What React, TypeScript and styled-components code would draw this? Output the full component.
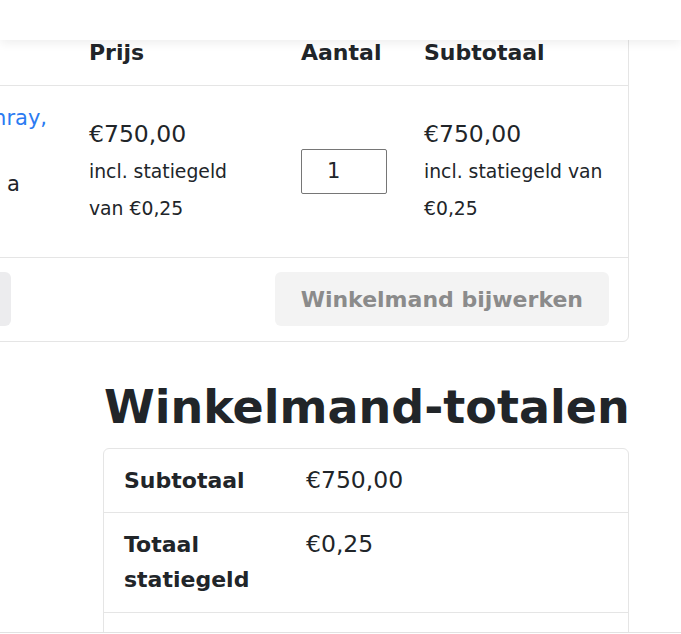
import { FC } from 'react';
import styled, { createGlobalStyle } from 'styled-components';

const GlobalStyle = createGlobalStyle`
  html, body {
    margin: 0;
    padding: 0;
    background: #ffffff;
    overflow: hidden;
  }
  body {
    font-family: "DejaVu Sans", Inter, sans-serif;
    color: #212529;
  }
`;

const TopBar = styled.header`
  position: fixed;
  top: 0;
  left: 0;
  right: 0;
  height: 40px;
  background: #ffffff;
  box-shadow: 0 3px 10px rgba(0, 0, 0, 0.07);
  z-index: 10;
`;

const BottomBar = styled.div`
  position: fixed;
  left: 0;
  right: 0;
  top: 632px;
  height: 10px;
  background: #ffffff;
  border-top: 1px solid #e2e2e2;
  z-index: 10;
`;

const Page = styled.main`
  display: flex;
  flex-direction: column;
  align-items: flex-end;
  padding: 20px 52px 0 0;
  height: 634px;
  box-sizing: border-box;
`;

const Card = styled.div<{ $width: number }>`
  width: ${({ $width }) => $width}px;
  flex-shrink: 0;
  border: 1px solid #e5e5e5;
  border-radius: 6px;
  box-sizing: border-box;
  background: #ffffff;
`;

const CartRow = styled.div<{ $divider?: boolean }>`
  display: grid;
  grid-template-columns: minmax(0, 1fr) 212px 123px 224px;
  align-items: center;
  border-bottom: ${({ $divider }) => ($divider ? '1px solid #e5e5e5' : 'none')};
`;

const HeadCell = styled.div`
  padding: 18px 20px;
  font-size: 22px;
  line-height: 28px;
  font-weight: 700;
  white-space: nowrap;
`;

const Cell = styled.div`
  padding: 29px 20px 30px;
`;

const ProductCell = styled.div`
  align-self: start;
  padding: 16px 20px;
  text-align: right;
  overflow: hidden;
`;

const ProductLine = styled.div<{ $inset: number; $link?: boolean }>`
  padding-right: ${({ $inset }) => $inset}px;
  white-space: nowrap;
  font-size: 21px;
  line-height: 33px;
  color: ${({ $link }) => ($link ? '#2b7bf2' : '#212529')};
`;

const Amount = styled.div`
  font-size: 23.5px;
  line-height: 38px;
  white-space: nowrap;
`;

const Note = styled.div`
  font-size: 18.8px;
  line-height: 37px;
  white-space: nowrap;
`;

const QtyInput = styled.input`
  display: block;
  width: 86px;
  height: 45px;
  box-sizing: border-box;
  border: 1px solid #767676;
  border-radius: 2px;
  font-family: inherit;
  font-size: 21px;
  color: #212529;
  padding: 0 0 0 25px;
  background: #ffffff;
`;

const ActionsRow = styled.div`
  display: flex;
  justify-content: space-between;
  align-items: center;
  padding: 14px 19px 15px 20px;
`;

const CouponGroup = styled.div`
  display: flex;
  gap: 12px;
  width: 261px;
  justify-content: flex-end;
`;

const Button = styled.button<{ $tone: 'muted' | 'soft' }>`
  height: 54px;
  border: none;
  border-radius: 6px;
  padding: 0 26px;
  font-family: inherit;
  font-size: 22px;
  font-weight: 700;
  white-space: nowrap;
  background: ${({ $tone }) => ($tone === 'muted' ? '#f3f3f3' : '#ececee')};
  color: #8b8b8b;
`;

const TotalsHeading = styled.h2`
  width: 525px;
  margin: 37px 0 13px;
  box-sizing: border-box;
  font-size: 46px;
  line-height: 56px;
  font-weight: 700;
  white-space: nowrap;
`;

const TotalsRow = styled.div<{ $height: number }>`
  display: grid;
  grid-template-columns: 182px 1fr;
  min-height: ${({ $height }) => $height}px;
  border-bottom: 1px solid #e5e5e5;
  box-sizing: border-box;
`;

const TotalsLabel = styled.div`
  padding: 14px 20px;
  font-size: 22px;
  line-height: 35px;
  font-weight: 700;
`;

const TotalsValue = styled.div`
  padding: 14px 20px;
  font-size: 23.5px;
  line-height: 35px;
`;

const PriceBlock: FC<{ amount: string; lines: string[] }> = ({ amount, lines }) => (
  <Cell>
    <Amount>{amount}</Amount>
    {lines.map((line) => (
      <Note key={line}>{line}</Note>
    ))}
  </Cell>
);

export default function App() {
  return (
    <>
      <GlobalStyle />
      <TopBar />
      <Page>
        <Card $width={900}>
          <CartRow $divider>
            <HeadCell>Product</HeadCell>
            <HeadCell>Prijs</HeadCell>
            <HeadCell>Aantal</HeadCell>
            <HeadCell>Subtotaal</HeadCell>
          </CartRow>
          <CartRow $divider>
            <ProductCell>
              <ProductLine $inset={2} $link>
                Thule, Sunray,
              </ProductLine>
              <ProductLine $inset={2}>&nbsp;</ProductLine>
              <ProductLine $inset={29}>Uitvoering: a</ProductLine>
            </ProductCell>
            <PriceBlock amount="€750,00" lines={['incl. statiegeld', 'van €0,25']} />
            <Cell>
              <QtyInput type="text" defaultValue="1" aria-label="Aantal" />
            </Cell>
            <PriceBlock amount="€750,00" lines={['incl. statiegeld van', '€0,25']} />
          </CartRow>
          <ActionsRow>
            <CouponGroup>
              <Button $tone="soft">Kortingsbon toepassen</Button>
            </CouponGroup>
            <Button $tone="muted">Winkelmand bijwerken</Button>
          </ActionsRow>
        </Card>
        <TotalsHeading>Winkelmand-totalen</TotalsHeading>
        <Card $width={526}>
          <TotalsRow $height={64}>
            <TotalsLabel>Subtotaal</TotalsLabel>
            <TotalsValue>€750,00</TotalsValue>
          </TotalsRow>
          <TotalsRow $height={100}>
            <TotalsLabel>
              Totaal
              <br />
              statiegeld
            </TotalsLabel>
            <TotalsValue>€0,25</TotalsValue>
          </TotalsRow>
          <TotalsRow $height={64}>
            <TotalsLabel>Totaal</TotalsLabel>
            <TotalsValue>€750,25</TotalsValue>
          </TotalsRow>
        </Card>
      </Page>
      <BottomBar />
    </>
  );
}
